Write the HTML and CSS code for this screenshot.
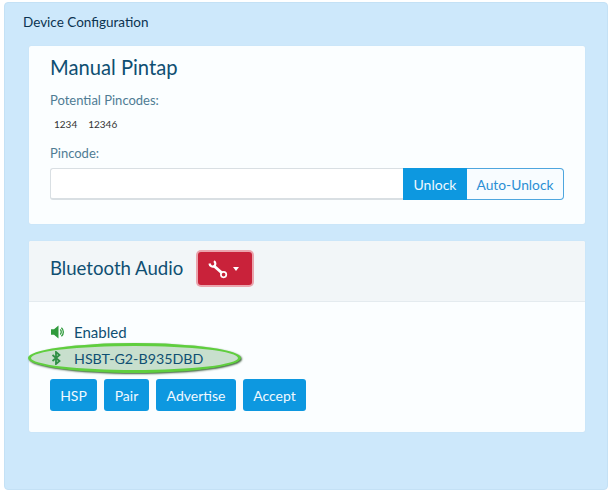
FILE: index.html
```html
<!DOCTYPE html>
<html lang="en">
<head>
<meta charset="utf-8">
<title>Device Configuration</title>
<link rel="stylesheet" href="styles.css">
</head>
<body>
<main class="panel">
  <h1 class="panel-title">Device Configuration</h1>
  <section class="card pintap">
    <h2 class="card-heading">Manual Pintap</h2>
    <p class="label">Potential Pincodes:</p>
    <div class="pins"><span>1234</span><span>12346</span></div>
    <p class="label pincode-label">Pincode:</p>
    <div class="input-group">
      <input class="pin-input" type="text" aria-label="Pincode">
      <button class="btn btn-unlock">Unlock</button>
      <button class="btn-auto">Auto-Unlock</button>
    </div>
  </section>
  <section class="card audio">
    <header class="audio-header">
      <h2 class="audio-heading">Bluetooth Audio</h2>
      <button class="tool-btn" aria-label="Tools">
        <svg width="20" height="20" viewBox="0 0 20 20"><path d="M1.5 4.5C1.8 7 4.3 8.2 6 7.2 7.8 6 7.8 3.5 6 2.2" fill="none" stroke="#fff" stroke-width="2.2"/><path d="M5.5 6.5 14 14" fill="none" stroke="#fff" stroke-width="3"/><circle cx="15.6" cy="15.6" r="2.7" fill="#c9223a" stroke="#fff" stroke-width="1.7"/></svg>
        <span class="caret"></span>
      </button>
    </header>
    <div class="audio-body">
      <div class="status">
        <svg class="status-icon" width="14" height="14" viewBox="0 0 14 14"><path d="M0 4.2H3L7.5 .5V13.5L3 9.8H0Z" fill="#2f9a3c"/><path d="M9.2 4.6C10.6 5.8 10.6 8.2 9.2 9.4M10.4 2.8C13 5 13 9 10.4 11.2" fill="none" stroke="#2f9a3c" stroke-width="1.3"/></svg>
        <span>Enabled</span>
      </div>
      <div class="status device">
        <span class="halo"></span>
        <svg class="status-icon bt" width="14" height="14" viewBox="0 0 14 14"><path d="M1.5 4 8.5 10 5 13V1L8.5 4 1.5 10" fill="none" stroke="#2f8f45" stroke-width="1.8"/></svg>
        <span class="device-name">HSBT-G2-B935DBD</span>
      </div>
      <div class="actions">
        <button class="btn action hsp">HSP</button>
        <button class="btn action pair">Pair</button>
        <button class="btn action advertise">Advertise</button>
        <button class="btn action accept">Accept</button>
      </div>
    </div>
  </section>
</main>
</body>
</html>
```
FILE: styles.css
```css
* { box-sizing: border-box; }
html, body { margin: 0; background: #fff; }
body { width: 610px; height: 493px; overflow: hidden; font-family: Lato, "Liberation Sans", sans-serif; }
p, h1, h2 { margin: 0; font-weight: 400; }
button { font-family: inherit; cursor: pointer; }

.panel {
  margin: 2px 2px 0 4px;
  height: 488px;
  padding: 10px 22px 0 24px;
  background: #cde8fb;
  border: 1px solid #c4e1f5;
  border-radius: 4px;
}
.panel-title { font-size: 13.5px; line-height: 18px; color: #0b3350; margin-left: -6px; }
.card { background: #fbfeff; border-radius: 2px; box-shadow: 0 0 1px #bcd4e4; }
.pintap { height: 178px; margin-top: 15px; padding: 8px 21px 0; }
.card-heading { font-size: 20.2px; line-height: 26px; color: #0f4f72; }
.audio-heading { font-size: 18.6px; line-height: 26px; color: #0f4f72; margin-top: -2px; }
.label { font-size: 13px; line-height: 18px; color: #4f7c94; }
.pintap .label { margin-top: 11px; }
.pins { display: flex; gap: 11px; padding-left: 4px; margin-top: 8px; font-size: 10px; line-height: 14px; color: #333; }
.pintap .pincode-label { margin-top: 13px; }
.input-group { display: flex; height: 32px; width: 514px; margin-top: 6px; }
.pin-input { flex: 1; min-width: 0; background: #fff; border: 1px solid #d9dfe3; border-bottom-width: 2px; border-right: 0; border-radius: 3px 0 0 3px; outline: 0; }
.btn { border: 0; background: #0d98e0; color: #f0f9ff; font-size: 14px; padding: 0; }
.btn-unlock { width: 64px; }
.btn-auto { width: 97px; background: #f8fcff; color: #2b8fd4; font-size: 13.8px; padding: 0; border: 1px solid #4ea6de; border-left: 0; border-radius: 0 4px 4px 0; }

.audio { height: 191px; margin-top: 17px; }
.audio-header { display: flex; align-items: center; gap: 15px; height: 61px; padding: 0 21px 5px; background: #f2f6f8; border-bottom: 1px solid #e4ebef; border-radius: 2px 2px 0 0; }
.tool-btn { display: flex; align-items: center; gap: 5px; width: 54px; height: 33px; padding: 0 0 0 10px; background: #c9223a; border: 0; border-radius: 3px; box-shadow: 0 0 0 2px #eba4ad; }
.caret { width: 0; height: 0; border: 3.5px solid transparent; border-top: 4px solid #fff; border-bottom: 0; }
.audio-body { padding: 21px 21px 0; }
.status { display: flex; align-items: center; gap: 9px; height: 18px; font-size: 15px; color: #0f4f72; }
.status-icon { flex: none; margin-left: 1px; }
.device { position: relative; height: 26px; margin-top: 4px; font-size: 14.25px; }
.halo { position: absolute; left: -22px; top: -2px; width: 213px; height: 30px; border-radius: 50%; background: #c8dfcd; border: 3.5px solid #5fce3e; box-shadow: 1px 1px 2px #3f5f3f; }
.bt, .device-name { position: relative; }
.actions { display: flex; gap: 7px; margin-top: 8px; }
.action { height: 32px; border-radius: 3px; font-size: 14px; }
.hsp { width: 47px; }
.pair { width: 45px; }
.advertise { width: 80px; }
.accept { width: 63px; }
```
